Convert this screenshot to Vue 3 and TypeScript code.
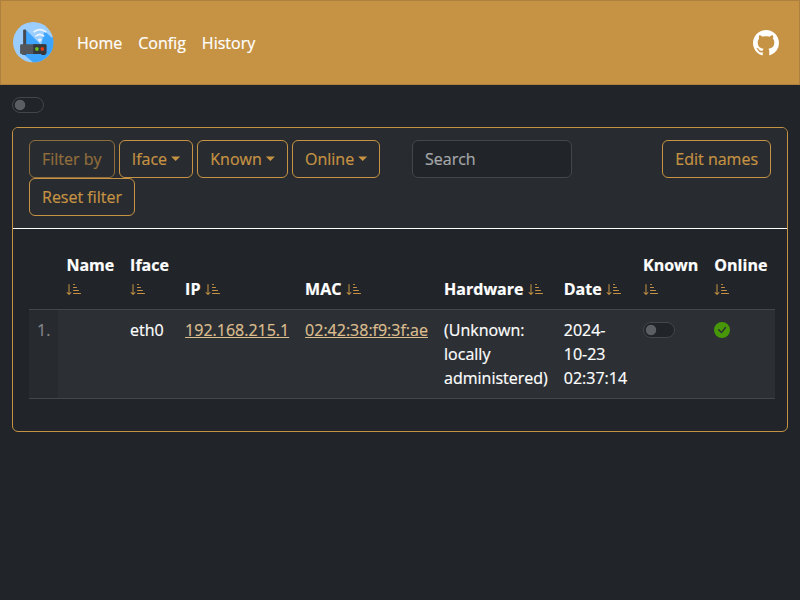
<script setup lang="ts">
import { ref } from 'vue'

interface Host {
  name: string
  iface: string
  ip: string
  mac: string
  hardware: string
  date: string
  known: boolean
}

const links: string[] = ['Home', 'Config', 'History']
const filters: string[] = ['Iface', 'Known', 'Online']
const columns: string[] = ['Name', 'Iface', 'IP', 'MAC', 'Hardware', 'Date', 'Known', 'Online']
const search = ref('')
const autoRefresh = ref(false)
const hosts = ref<Host[]>([
  {
    name: '',
    iface: 'eth0',
    ip: '192.168.215.1',
    mac: '02:42:38:f9:3f:ae',
    hardware: '(Unknown: locally administered)',
    date: '2024-10-23 02:37:14',
    known: false,
  },
])
</script>

<template>
  <div class="page">
    <nav class="navbar">
      <svg class="logo" viewBox="0 0 40 40">
        <defs>
          <clipPath id="disc"><circle cx="20" cy="20" r="20" /></clipPath>
        </defs>
        <g clip-path="url(#disc)">
          <rect width="40" height="40" fill="#9bcdff" />
          <path d="M13 8 L30 25 L40 14 V40 H20 L7 29 L12 24Z" fill="#3da5ff" />
          <path d="M31 9 L40 17 V30 H26Z" fill="#3da5ff" />
        </g>
        <g fill="none" stroke="#e9f3ff" stroke-width="1.8" stroke-linecap="round">
          <path d="M20.8 9.6 Q26.5 5.4 32.2 9.6" />
          <path d="M22.8 13.7 Q26.5 11 30.2 13.7" />
        </g>
        <path d="M24.4 17.2 Q26.5 15.6 28.6 17.2 L26.5 20Z" fill="#e9f3ff" />
        <rect x="10" y="7.5" width="3" height="16" rx="1" fill="#46494f" />
        <path d="M9 31h4v1.3H9zM28 31h4v1.5h-4z" fill="#33363b" />
        <rect x="7" y="22" width="26" height="9.5" rx="1.2" fill="#53565b" />
        <path d="M20 22h11.8q1.2 0 1.2 1.2v7.1q0 1.2-1.2 1.2H20z" fill="#35383d" />
        <rect x="22" y="25" width="3.2" height="3.4" rx="1" fill="#6ac51c" />
        <rect x="27.4" y="25" width="3.2" height="3.4" rx="1" fill="#e63b19" />
      </svg>
      <div class="links">
        <a v-for="link in links" :key="link" href="#">{{ link }}</a>
      </div>
      <a class="github" href="#" aria-label="GitHub">
        <svg viewBox="0 0 16 16" fill="currentColor">
          <path
            d="M8 0C3.58 0 0 3.58 0 8c0 3.54 2.29 6.53 5.47 7.59.4.07.55-.17.55-.38 0-.19-.01-.82-.01-1.49-2.01.37-2.53-.49-2.69-.94-.09-.23-.48-.94-.82-1.13-.28-.15-.68-.52-.01-.53.63-.01 1.08.58 1.23.82.72 1.21 1.87.87 2.33.66.07-.52.28-.87.51-1.07-1.78-.2-3.64-.89-3.64-3.95 0-.87.31-1.59.82-2.15-.08-.2-.36-1.02.08-2.12 0 0 .67-.21 2.2.82.64-.18 1.32-.27 2-.27s1.36.09 2 .27c1.53-1.04 2.2-.82 2.2-.82.44 1.1.16 1.92.08 2.12.51.56.82 1.27.82 2.15 0 3.07-1.87 3.75-3.65 3.95.29.25.54.73.54 1.48 0 1.07-.01 1.93-.01 2.2 0 .21.15.46.55.38A8.01 8.01 0 0 0 16 8c0-4.42-3.58-8-8-8"
          />
        </svg>
      </a>
    </nav>

    <main class="container">
      <input v-model="autoRefresh" class="switch refresh" type="checkbox" />

      <section class="card">
        <header class="card-header">
          <div class="filters">
            <button class="btn" disabled>Filter by</button>
            <button v-for="f in filters" :key="f" class="btn caret">{{ f }}</button>
            <button class="btn">Reset filter</button>
          </div>
          <input v-model="search" class="search" type="text" placeholder="Search" />
          <button class="btn edit">Edit names</button>
        </header>

        <div class="card-body">
          <table>
            <colgroup>
              <col class="c-num" />
              <col v-for="c in columns" :key="c" :class="'c-' + c.toLowerCase()" />
            </colgroup>
            <thead>
              <tr>
                <th></th>
                <th v-for="c in columns" :key="c">
                  {{ c }}
                  <svg class="icon sort" viewBox="0 0 16 16" fill="currentColor">
                    <path
                      d="M3.5 3.5a.5.5 0 0 0-1 0v8.793l-1.146-1.147a.5.5 0 0 0-.708.708l2 1.999.007.007a.497.497 0 0 0 .7-.006l2-2a.5.5 0 0 0-.707-.708L3.5 12.293zm4 .5a.5.5 0 0 1 0-1h1a.5.5 0 0 1 0 1zm0 3a.5.5 0 0 1 0-1h3a.5.5 0 0 1 0 1zm0 3a.5.5 0 0 1 0-1h5a.5.5 0 0 1 0 1zM7 12.5a.5.5 0 0 0 .5.5h7a.5.5 0 0 0 0-1h-7a.5.5 0 0 0-.5.5"
                    />
                  </svg>
                </th>
              </tr>
            </thead>
            <tbody>
              <tr v-for="(host, i) in hosts" :key="host.mac">
                <td class="num">{{ i + 1 }}.</td>
                <td>{{ host.name }}</td>
                <td>{{ host.iface }}</td>
                <td><a href="#">{{ host.ip }}</a></td>
                <td><a href="#">{{ host.mac }}</a></td>
                <td>{{ host.hardware }}</td>
                <td>{{ host.date }}</td>
                <td><input v-model="host.known" class="switch" type="checkbox" /></td>
                <td>
                  <svg class="icon online" viewBox="0 0 16 16" fill="currentColor">
                    <path
                      d="M16 8A8 8 0 1 1 0 8a8 8 0 0 1 16 0m-3.97-3.03a.75.75 0 0 0-1.08.022L7.477 9.417 5.384 7.323a.75.75 0 0 0-1.06 1.06L6.97 11.03a.75.75 0 0 0 1.079-.02l3.992-4.99a.75.75 0 0 0-.01-1.05z"
                    />
                  </svg>
                </td>
              </tr>
            </tbody>
          </table>
        </div>
      </section>
    </main>
  </div>
</template>

<style>
body {
  background: #212529;
}
</style>

<style scoped>
* {
  box-sizing: border-box;
}
.page {
  font: 16px/24px 'Open Sans', 'Liberation Sans', sans-serif;
  color: #fff;
  -webkit-text-stroke: 0.2px;
}
.navbar {
  display: flex;
  align-items: center;
  height: 85px;
  padding: 0 20px 0 12px;
  background: #c69344;
  border: 1px solid #ad803d;
}
.logo {
  width: 40.5px;
  height: 40.5px;
}
.links {
  display: flex;
  flex: 1;
  gap: 16px;
  padding-left: 23.5px;
}
.links a {
  color: #fff;
  text-decoration: none;
}
.github {
  height: 26px;
  color: #fff;
}
.github svg {
  display: block;
  width: 26px;
  height: 26px;
}
.container {
  padding: 12px 12px 0;
}
.switch {
  display: block;
  appearance: none;
  width: 32px;
  height: 16px;
  margin: 4px 0 0;
  border: 1px solid #43464a;
  border-radius: 16px;
  background: #212529 radial-gradient(circle at 7px 7px, #5b5f63 4.8px, transparent 5.6px);
}
.refresh {
  margin: 0 0 14px;
}
.card {
  border: 1px solid #c69344;
  border-radius: 6px;
}
.card-header {
  display: grid;
  grid-template-columns: 367px 160px 1fr;
  column-gap: 16px;
  align-items: start;
  padding: 12px 16px;
  border-bottom: 1px solid #fff;
  border-radius: 5px 5px 0 0;
  background: #282b2f;
}
.filters {
  display: flex;
  flex-wrap: wrap;
  column-gap: 4.16px;
}
.btn {
  height: 38px;
  padding: 6px 12px;
  border: 1px solid #c69344;
  border-radius: 6px;
  background: transparent;
  color: #c69344;
  font: inherit;
  line-height: 24px;
}
.btn:disabled {
  opacity: 0.65;
}
.caret::after {
  content: '';
  display: inline-block;
  width: 9px;
  height: 4.5px;
  margin-left: 4.08px;
  vertical-align: 4.08px;
  background: currentColor;
  clip-path: polygon(0 0, 100% 0, 50% 100%);
}
.edit {
  justify-self: end;
}
.search {
  width: 160px;
  height: 38px;
  padding: 6px 12px;
  border: 1px solid #43464a;
  border-radius: 6px;
  background: #212529;
  color: #fff;
  font: inherit;
}
.search::placeholder {
  color: #a6a8a9;
  opacity: 1;
}
.card-body {
  padding: 16px;
}
table {
  width: 746px;
  margin-bottom: 16px;
  table-layout: fixed;
  border-collapse: collapse;
}
.c-num { width: 29.4px; }
.c-name { width: 63.7px; }
.c-iface { width: 55px; }
.c-ip { width: 120px; }
.c-mac { width: 139px; }
.c-hardware { width: 119.7px; }
.c-date { width: 79.3px; }
.c-known { width: 71.3px; }
.c-online { width: 68.6px; }
th,
td {
  padding: 8px;
  text-align: left;
}
th {
  vertical-align: bottom;
  font-weight: 700;
}
td {
  vertical-align: top;
  background: #2c3034;
}
tr {
  border-bottom: 1px solid #43464a;
}
td.num {
  color: #85888b;
  background: #272b2f;
}
td a {
  color: #ddbe8f;
}
.icon {
  display: inline-block;
  width: 16px;
  height: 16px;
  vertical-align: -2px;
}
.sort {
  color: #c69344;
}
.online {
  color: #479708;
}
</style>
